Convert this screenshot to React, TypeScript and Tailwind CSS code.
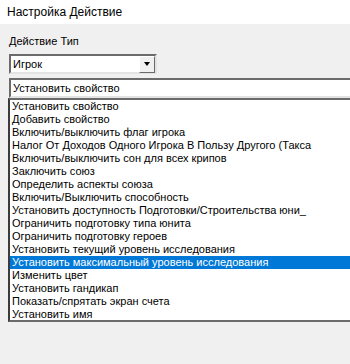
import React from 'react';

const ACTIONS = [
  'Установить свойство',
  'Добавить свойство',
  'Включить/выключить флаг игрока',
  'Налог От Доходов Одного Игрока В Пользу Другого (Такса',
  'Включить/выключить сон для всех крипов',
  'Заключить союз',
  'Определить аспекты союза',
  'Включить/Выключить способность',
  'Установить доступность Подготовки/Строительства юни_',
  'Ограничить подготовку типа юнита',
  'Ограничить подготовку героев',
  'Установить текущий уровень исследования',
  'Установить максимальный уровень исследования',
  'Изменить цвет',
  'Установить гандикап',
  'Показать/спрятать экран счета',
  'Установить имя',
];

const SELECTED = 12;

const App: React.FC = () => {
  return (
    <div className="w-[350px] h-[364px] overflow-hidden bg-[#f0f0f0] text-black font-['Liberation_Sans',Arial,sans-serif]">
      {/* window title */}
      <div className="h-[24px] bg-white pl-[7px] text-[12px] leading-[24px]">Настройка Действие</div>

      <div className="pl-[9px] pt-[11px]">
        <div className="h-[13px] text-[11px] leading-[13px]">Действие Тип</div>

        {/* combobox */}
        <div className="mt-[6px] flex h-[20px] w-[148px] items-center border-2 border-t-[#6b6b6b] border-l-[#6b6b6b] border-r-[#e3e3e3] border-b-[#e3e3e3] bg-white">
          <span className="flex-1 pl-[2px] text-[11px] leading-[13px]">Игрок</span>
          <div className="flex h-[17px] w-[16px] items-center justify-center border border-t-white border-l-white border-r-[#696969] border-b-[#696969] bg-[#f0f0f0]">
            <div className="h-0 w-0 border-x-[3.5px] border-t-[4px] border-x-transparent border-t-black" />
          </div>
        </div>

        {/* text field */}
        <div className="mt-[4px] flex h-[20px] w-[400px] items-center border-2 border-t-[#6b6b6b] border-l-[#6b6b6b] border-r-[#e3e3e3] border-b-[#e3e3e3] bg-white pl-[2px] text-[11px] leading-[13px]">
          Установить свойство
        </div>

        {/* list */}
        <div className="ml-[-1px] h-[224px] w-[400px] border-2 border-t-[#6b6b6b] border-l-[#3c3c3c] border-b-[#6b6b6b] border-r-[#6b6b6b] bg-white">
          {ACTIONS.map((a, i) => (
            <div
              key={a}
              className={
                'h-[13px] whitespace-nowrap pl-[2px] text-[11px] leading-[13px] ' +
                (i === SELECTED ? 'bg-[#0078d7] text-white' : '')
              }
            >
              {a}
            </div>
          ))}
        </div>
      </div>
    </div>
  );
};

export default App;
